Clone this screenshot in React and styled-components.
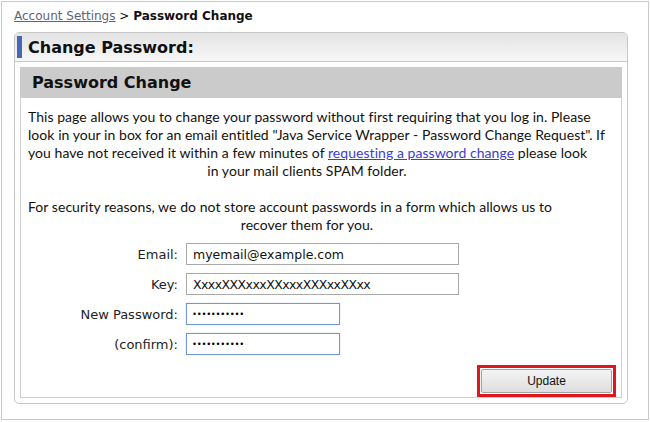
import React from "react";
import styled, { createGlobalStyle } from "styled-components";

const Global = createGlobalStyle`
  html, body { margin: 0; padding: 0; background: #fff; }
  body { font-family: "DejaVu Sans", Verdana, sans-serif; }
`;

const Frame = styled.div`
  box-sizing: border-box;
  margin: 1px 0 0 1px;
  width: 648px;
  height: 419px;
  border: 1px solid #c9c9c9;
`;

const Crumbs = styled.div`
  height: 30px;
  box-sizing: border-box;
  padding: 7px 0 0 12px;
  font-family: "DejaVu Sans", Verdana, sans-serif;
  font-size: 12px;
  color: #111;
`;

const CrumbLink = styled.a`
  color: #5b6478;
  text-decoration: underline;
`;

const Current = styled.b`
  font-weight: bold;
  color: #111;
`;

const Panel = styled.div`
  box-sizing: border-box;
  margin-left: 12px;
  width: 614px;
  border: 1px solid #c8c8c8;
  border-radius: 5px;
  overflow: hidden;
`;

const PanelHead = styled.div`
  display: flex;
  align-items: center;
  gap: 6px;
  height: 28px;
  padding-left: 2px;
  border-bottom: 1px solid #c8c8c8;
  background: linear-gradient(#e3e3e3, #f7f7f7);
`;

const Accent = styled.span`
  width: 5px;
  height: 22px;
  background: #4468b3;
`;

const PanelTitle = styled.h1`
  margin: 0;
  font-family: "DejaVu Sans", Verdana, sans-serif;
  font-size: 16px;
  font-weight: bold;
  color: #111;
`;

const PanelBody = styled.div`
  padding: 5px;
`;

const Box = styled.div`
  border: 1px solid #cfcfcf;
  border-top: none;
`;

const BoxHead = styled.h2`
  margin: 0 -1px;
  height: 31px;
  display: flex;
  align-items: center;
  padding-left: 12px;
  background: #cbcbcb;
  font-family: "DejaVu Sans", Verdana, sans-serif;
  font-size: 16px;
  font-weight: bold;
  color: #111;
`;

const Intro = styled.div`
  width: 558px;
  padding: 10px 0 0 7px;
  font-family: Lato, "Open Sans", sans-serif;
  font-size: 14px;
  letter-spacing: 0.05px;
  line-height: 18px;
  color: #111;
`;

const Line = styled.span`
  display: block;
  min-height: 18px;
  white-space: nowrap;
  text-align: ${(p) => (p.$center ? "center" : "left")};
`;

const Link = styled.a`
  color: #3c3cd0;
  text-decoration: underline;
`;

const Form = styled.div`
  display: grid;
  grid-template-columns: 157px auto;
  column-gap: 8px;
  row-gap: 8px;
  margin-top: 9px;
  align-items: center;
  justify-items: start;
`;

const Label = styled.label`
  justify-self: end;
  font-family: "DejaVu Sans", Verdana, sans-serif;
  font-size: 13px;
  color: #222;
`;

const Field = styled.input`
  box-sizing: border-box;
  width: 273px;
  height: 22px;
  margin: 0;
  padding: 0 6px;
  font-family: "DejaVu Sans", Verdana, sans-serif;
  font-size: 12.5px;
  letter-spacing: ${(p) => (p.$tight ? "-0.55px" : "normal")};
  color: #111;
  background: #fff;
  border: 1px solid #a9a9a9;
  outline: none;
`;

const PasswordField = styled(Field)`
  width: 154px;
  padding: 0 5px;
  font-size: 8.5px;
  letter-spacing: -0.3px;
  color: #000;
  border-color: #7196dc;
  box-shadow: 0 0 1px 0 #a9c1ee;
`;

const Actions = styled.div`
  display: flex;
  justify-content: flex-end;
  padding: 10px 5px 0 0;
`;

const Highlight = styled.div`
  border: 3px solid #e0161f;
  padding: 1px;
`;

const Button = styled.button`
  box-sizing: border-box;
  width: 131px;
  height: 24px;
  margin: 0;
  font-family: "Liberation Sans", Arial, sans-serif;
  font-size: 12px;
  color: #111;
  border: 1px solid #a3a3a3;
  border-radius: 2px;
  background: linear-gradient(#f4f4f4, #dedede);
`;

export default function App() {
  return (
    <>
      <Global />
      <Frame>
        <Crumbs>
          <CrumbLink href="#">Account Settings</CrumbLink> &gt; <Current>Password Change</Current>
        </Crumbs>
        <Panel>
          <PanelHead>
            <Accent />
            <PanelTitle>Change Password:</PanelTitle>
          </PanelHead>
          <PanelBody>
            <Box>
              <BoxHead>Password Change</BoxHead>
              <Intro>
                <Line>This page allows you to change your password without first requiring that you log in. Please</Line>
                <Line>look in your in box for an email entitled "Java Service Wrapper - Password Change Request". If</Line>
                <Line>
                  you have not received it within a few minutes of <Link href="#">requesting a password change</Link> please look
                </Line>
                <Line $center>in your mail clients SPAM folder.</Line>
                <Line />
                <Line>For security reasons, we do not store account passwords in a form which allows us to</Line>
                <Line $center>recover them for you.</Line>
              </Intro>
              <Form>
                <Label>Email:</Label>
                <Field readOnly value="myemail@example.com" />
                <Label>Key:</Label>
                <Field readOnly $tight value="XxxxXXXxxxXXxxxXXXxxXXxx" />
                <Label>New Password:</Label>
                <PasswordField readOnly type="password" value="xxxxxxxxxxx" />
                <Label>(confirm):</Label>
                <PasswordField readOnly type="password" value="xxxxxxxxxxx" />
              </Form>
              <Actions>
                <Highlight>
                  <Button>Update</Button>
                </Highlight>
              </Actions>
            </Box>
          </PanelBody>
        </Panel>
      </Frame>
    </>
  );
}
